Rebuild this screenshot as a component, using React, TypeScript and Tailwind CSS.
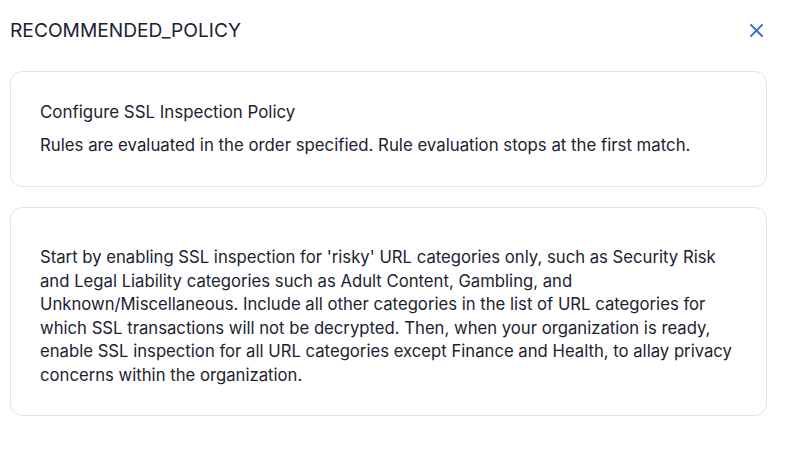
import React from 'react';

const body =
  "Start by enabling SSL inspection for 'risky' URL categories only, such as Security Risk and Legal Liability categories such as Adult Content, Gambling, and Unknown/Miscellaneous. Include all other categories in the list of URL categories for which SSL transactions will not be decrypted. Then, when your organization is ready, enable SSL inspection for all URL categories except Finance and Health, to allay privacy concerns within the organization.";

export default function App() {
  return (
    <div className="w-[787px] h-[456px] bg-white font-['Inter',sans-serif] text-[#1c2230]">
      <div className="flex items-center justify-between pl-[10px] pr-[23px] pt-[16px] h-[44px]">
        <h2 className="text-[19.2px] leading-[24px] font-normal">RECOMMENDED_POLICY</h2>
        <button className="text-[#2f6bdc]" aria-label="Close">
          <svg width="15" height="15" viewBox="0 0 15 15" fill="none" stroke="currentColor" strokeWidth="1.8" strokeLinecap="square">
            <path d="M2 2 L13 13 M13 2 L2 13" />
          </svg>
        </button>
      </div>

      <div className="flex flex-col gap-[20px] px-[10px] pt-[27px] w-[777px]">
        <div className="rounded-[12px] border border-[#e1e4ea] pl-[29px] pr-[20px] pt-[29px] pb-[29px]">
          <div className="text-[16.9px] leading-[23px] font-normal">Configure SSL Inspection Policy</div>
          <p className="mt-[10px] text-[16.8px] leading-[23px]">
            Rules are evaluated in the order specified. Rule evaluation stops at the first match.
          </p>
        </div>

        <div className="rounded-[12px] border border-[#e1e4ea] pl-[29px] pr-[22px] pt-[38px] pb-[28px]">
          <p className="text-[16.7px] leading-[23.5px]">{body}</p>
        </div>
      </div>
    </div>
  );
}
